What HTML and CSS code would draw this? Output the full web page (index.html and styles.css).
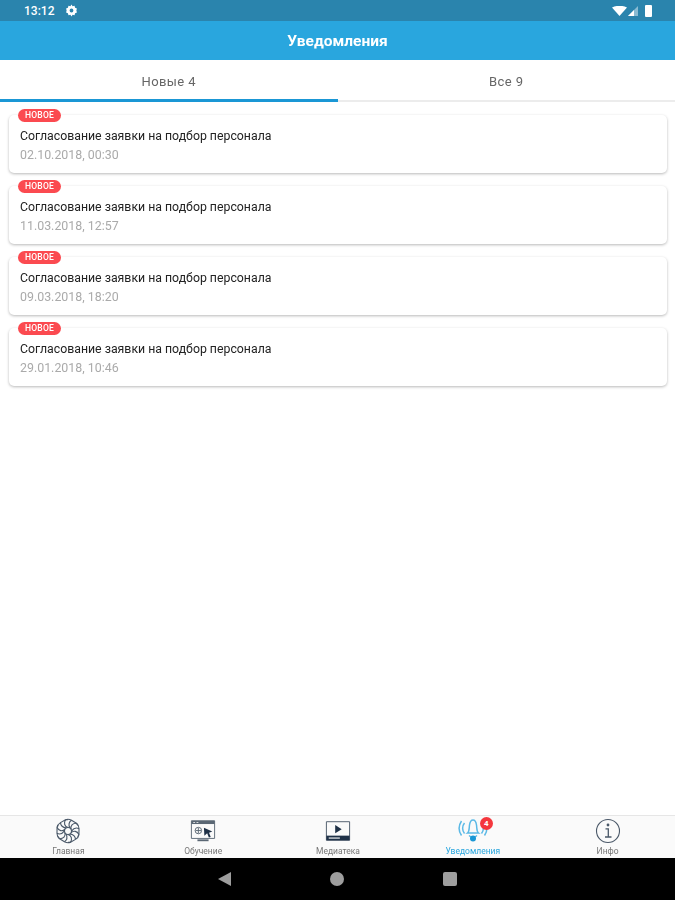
FILE: index.html
```html
<!DOCTYPE html>
<html lang="ru">
<head>
    <meta charset="UTF-8">
    <meta name="viewport" content="width=device-width, initial-scale=1.0">
    <title>Уведомления</title>
    <link rel="stylesheet" href="styles.css">
</head>
<body>

    <div class="status-bar">
        <div class="status-left">
            <span>13:12</span>
            <svg class="status-gear" viewBox="0 0 24 24"><path fill="#fff" fill-rule="evenodd" d="M12 1l2 3 3.600-.6 1 3.500 3.400 1.300-1 3.800 1 3.800-3.400 1.300-1 3.500-3.600-.6-2 3-2-3-3.600.6-1-3.500L2 15.800 3 12 2 8.200l3.400-1.300 1-3.500L10 4zm0 7.500a3.500 3.500 0 100 7 3.500 3.500 0 000-7z"/></svg>
        </div>
        <div class="status-right">
            <svg width="15" height="10" viewBox="0 0 15 10"><path fill="#fff" d="M0 1.500Q7.500-2 15 1.500L7.500 10z"/></svg>
            <svg width="10" height="10" viewBox="0 0 10 10"><path fill="#fff" fill-opacity=".45" d="M10 0v10H0z"/><path fill="#fff" d="M6 4v6H0z"/></svg>
            <span class="battery"></span>
        </div>
    </div>

    <header class="app-bar">Уведомления</header>

    <nav class="tabs">
        <div class="tab tab-active">Новые 4</div>
        <div class="tab">Все 9</div>
    </nav>

    <main class="list">
        <div class="card">
            <span class="badge">НОВОЕ</span>
            <div class="card-title">Согласование заявки на подбор персонала</div>
            <div class="card-date">02.10.2018, 00:30</div>
        </div>
        <div class="card">
            <span class="badge">НОВОЕ</span>
            <div class="card-title">Согласование заявки на подбор персонала</div>
            <div class="card-date">11.03.2018, 12:57</div>
        </div>
        <div class="card">
            <span class="badge">НОВОЕ</span>
            <div class="card-title">Согласование заявки на подбор персонала</div>
            <div class="card-date">09.03.2018, 18:20</div>
        </div>
        <div class="card">
            <span class="badge">НОВОЕ</span>
            <div class="card-title">Согласование заявки на подбор персонала</div>
            <div class="card-date">29.01.2018, 10:46</div>
        </div>
    </main>

    <footer class="bottom-nav">
        <div class="nav-item">
            <svg class="nav-icon" viewBox="0 0 26 26" fill="none" stroke="#4a5868" stroke-width="1.100">
                <defs>
                    <g id="swirl">
                        <path d="M13 9.500C9.500 8.500 8.500 5 10.500 1.800"/>
                        <path d="M14.800 10C13.500 7 14 4 16.500 2.300"/>
                        <path d="M10.500 1.800c2-.9 4-.6 6 .5l4.500 2.700c1 .6 1.500 1.500 1.700 2.500"/>
                    </g>
                </defs>
                <use href="#swirl"/>
                <use href="#swirl" transform="rotate(60 13 13)"/>
                <use href="#swirl" transform="rotate(120 13 13)"/>
                <use href="#swirl" transform="rotate(180 13 13)"/>
                <use href="#swirl" transform="rotate(240 13 13)"/>
                <use href="#swirl" transform="rotate(300 13 13)"/>
                <circle cx="13" cy="13" r="3.500"/>
            </svg>
            <span>Главная</span>
        </div>
        <div class="nav-item">
            <svg class="nav-icon" viewBox="0 0 28 26" fill="none" stroke="#5a6774" stroke-width="1">
                <path d="M1.500 2h25v19h-25z"/>
                <path fill="#5a6774" stroke="none" d="M1.500 2h25v3.500h-25z"/>
                <path fill="#fff" stroke="none" d="M3.500 3.200h2v1h-2zM7 3.200h2v1H7z"/>
                <circle cx="9" cy="12.500" r="3.500"/>
                <path d="M6 12.500h6M9 9.500v6"/>
                <path fill="#1f3147" stroke="none" d="M15 9.500l9 4-3.500 1.500 1.800 4.500-2 .5-1.800-4.500-3 2.500z"/>
                <path stroke-width="2" d="M8 23h12"/>
            </svg>
            <span>Обучение</span>
        </div>
        <div class="nav-item">
            <svg class="nav-icon" viewBox="0 0 28 26" fill="none" stroke="#4a5868" stroke-width="1">
                <path d="M1.500 3h25v20h-25z"/>
                <path fill="#1f3147" stroke="none" d="M1.500 18h25v5h-25z"/>
                <path fill="#fff" stroke="none" d="M4 20h12v1.200H4z"/>
                <path fill="#1f3147" stroke="none" d="M11 6.500l7 4.500-7 4.500z"/>
            </svg>
            <span>Медиатека</span>
        </div>
        <div class="nav-item nav-item-active">
            <div class="nav-bell">
                <svg class="nav-icon nav-icon-bell" viewBox="0 0 30 26" fill="none" stroke="#5bb9e6" stroke-width="1.500">
                    <path d="M9.500 15c2-1.500 1.500-4.500 2-8C12 3.500 13.500 2 15 2s3 1.500 3.500 5c.5 3.500 0 6.500 2 8z"/>
                    <path d="M6.500 5C4 8 4 12.500 6.500 15.500M3.500 3C.5 7.500.5 13 3.500 17.500M23.500 5c2.500 3 2.500 7.500 0 10.500M26.500 3c3 4.500 3 10 0 14.500"/>
                    <path d="M11 17.500l2 1.500M19 17.500l-2 1.500"/>
                    <circle cx="15" cy="20.500" r="3" fill="#1a97d5" stroke="none"/>
                </svg>
                <span class="nav-count">4</span>
            </div>
            <span>Уведомления</span>
        </div>
        <div class="nav-item">
            <svg class="nav-icon" viewBox="0 0 26 26" fill="none" stroke="#4a5868" stroke-width="1.100">
                <circle cx="13" cy="13" r="11.500"/>
                <path stroke-width="1.300" d="M10.500 10.800h2.800v8.200M10 19h6.500"/>
                <circle cx="13" cy="7" r="1.400" fill="#4a5868" stroke="none"/>
            </svg>
            <span>Инфо</span>
        </div>
    </footer>

    <div class="system-nav">
        <span class="sys-back"></span>
        <span class="sys-home"></span>
        <span class="sys-recent"></span>
    </div>

</body>
</html>
```

FILE: styles.css
```css
html, body {
    margin: 0;
    height: 100%;
}

body {
    display: flex;
    flex-direction: column;
    height: 900px;
    overflow: hidden;
    background-color: #fff;
    font-family: Roboto, 'Liberation Sans', sans-serif;
    color: #222;
    filter: blur(0.45px);
}

.status-bar {
    display: flex;
    justify-content: space-between;
    align-items: center;
    height: 21px;
    padding: 0 23px 0 24px;
    background-color: #2a84ad;
    color: #fff;
    font-size: 12px;
    font-weight: 500;
}

.status-left,
.status-right {
    display: flex;
    align-items: center;
}

.status-left {
    gap: 11px;
}

.status-right {
    gap: 1px;
}

.status-gear {
    width: 13px;
    height: 13px;
}

.battery {
    width: 7px;
    height: 12px;
    margin-left: 6px;
    border-radius: 1px;
    background-color: #fff;
}

.app-bar {
    height: 39px;
    line-height: 41px;
    text-align: center;
    background-color: #29a6de;
    color: #fff;
    font-size: 15.500px;
    font-weight: 700;
}

.tabs {
    display: flex;
    height: 42px;
    box-sizing: border-box;
    border-bottom: 2px solid #ececec;
}

.tab {
    flex: 1;
    height: 42px;
    box-sizing: border-box;
    padding-top: 14px;
    text-align: center;
    font-size: 13px;
    color: #666;
    letter-spacing: 0.4px;
}

.tab-active {
    border-bottom: 3px solid #1a97d5;
}

.list {
    flex: 1;
    display: flex;
    flex-direction: column;
    gap: 13px;
    padding: 13px 8px 0 9px;
}

.card {
    height: 58px;
    box-sizing: border-box;
    padding: 14px 0 0 11px;
    border-radius: 5px;
    background-color: #fff;
    box-shadow: 0 1px 3px rgba(0, 0, 0, 0.28);
    position: relative;
}

.badge {
    position: absolute;
    top: -6px;
    left: 9px;
    width: 43px;
    height: 13px;
    line-height: 13px;
    border-radius: 7px;
    background-color: #fb4a50;
    color: #fff;
    font-size: 8.500px;
    font-weight: 500;
    text-align: center;
    letter-spacing: 0.2px;
}

.card-title {
    font-size: 12.300px;
    line-height: 14px;
    color: #222;
}

.card-date {
    margin-top: 5px;
    font-size: 12.400px;
    line-height: 14px;
    color: #aaa;
}

.bottom-nav {
    display: flex;
    height: 43px;
    box-sizing: border-box;
    padding: 2px 0 0 1px;
    border-top: 1px solid #e6e6e6;
    background-color: #fafafa;
}

.nav-item {
    flex: 1;
    display: flex;
    flex-direction: column;
    align-items: center;
    font-size: 8.500px;
    color: #777;
}

.nav-item span {
    line-height: 9px;
    margin-top: 3px;
}

.nav-item-active {
    color: #29a6de;
}

.nav-icon {
    display: block;
    width: 26px;
    height: 26px;
}

.nav-icon-bell {
    width: 30px;
}

.nav-bell {
    position: relative;
}

.nav-item .nav-count {
    position: absolute;
    top: -1px;
    right: -5px;
    width: 13px;
    height: 13px;
    margin: 0;
    line-height: 13px;
    border-radius: 50%;
    background-color: #f4373d;
    color: #fff;
    font-size: 8px;
    font-weight: 700;
    text-align: center;
}

.system-nav {
    display: flex;
    justify-content: center;
    align-items: center;
    gap: 99px;
    height: 42px;
    background-color: #000;
}

.sys-back {
    width: 0;
    height: 0;
    border-top: 7px solid transparent;
    border-bottom: 7px solid transparent;
    border-right: 13px solid #9e9e9e;
}

.sys-home {
    width: 14px;
    height: 14px;
    border-radius: 50%;
    background-color: #9e9e9e;
}

.sys-recent {
    width: 14px;
    height: 14px;
    border-radius: 2px;
    background-color: #9e9e9e;
}
```
